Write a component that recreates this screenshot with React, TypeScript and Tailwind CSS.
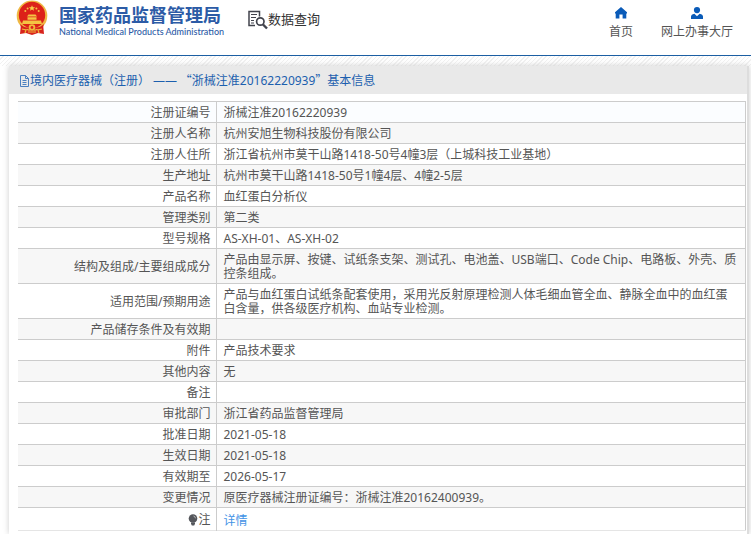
const records = [
  { label: '注册证编号', value: '浙械注准20162220939' },
  { label: '注册人名称', value: '杭州安旭生物科技股份有限公司' },
  { label: '注册人住所', value: '浙江省杭州市莫干山路1418-50号4幢3层（上城科技工业基地）' },
  { label: '生产地址', value: '杭州市莫干山路1418-50号1幢4层、4幢2-5层' },
  { label: '产品名称', value: '血红蛋白分析仪' },
  { label: '管理类别', value: '第二类' },
  { label: '型号规格', value: 'AS-XH-01、AS-XH-02' },
  {
    label: '结构及组成/主要组成成分',
    value: '产品由显示屏、按键、试纸条支架、测试孔、电池盖、USB端口、Code Chip、电路板、外壳、质控条组成。',
  },
  {
    label: '适用范围/预期用途',
    value: '产品与血红蛋白试纸条配套使用，采用光反射原理检测人体毛细血管全血、静脉全血中的血红蛋白含量，供各级医疗机构、血站专业检测。',
  },
  { label: '产品储存条件及有效期', value: '' },
  { label: '附件', value: '产品技术要求' },
  { label: '其他内容', value: '无' },
  { label: '备注', value: '' },
  { label: '审批部门', value: '浙江省药品监督管理局' },
  { label: '批准日期', value: '2021-05-18' },
  { label: '生效日期', value: '2021-05-18' },
  { label: '有效期至', value: '2026-05-17' },
  { label: '变更情况', value: '原医疗器械注册证编号：浙械注准20162400939。' },
];

function Emblem() {
  return (
    <svg viewBox="0 0 32 35" className="w-8 h-[35px] shrink-0" aria-hidden="true">
      <path d="M5 24 L27 24 L28 34 L22 33 L16 35 L10 33 L4 34 Z" fill="#d8231c" />
      <circle cx="16" cy="15.8" r="15.3" fill="#efb843" />
      <circle cx="16" cy="15" r="13.2" fill="#dc2119" />
      <path d="M16 5.2 l.9 2 2.2.1 -1.7 1.4 .6 2.1 -2-1.2 -2 1.2 .6-2.1 -1.7-1.4 2.2-.1z" fill="#f7cf4a" />
      <g fill="#f4c443">
        <circle cx="9.3" cy="11" r="1" />
        <circle cx="22.7" cy="11" r="1" />
        <circle cx="11.6" cy="8.6" r="1" />
        <circle cx="20.4" cy="8.6" r="1" />
        <path d="M12.5 14.5h7l1.5 2H11zM11.5 17.3h9v2.4h-9zM7 20.5h18l1 3.5H6z" />
      </g>
      <path d="M4 24 Q10 29 13 27 L16 25 L19 27 Q22 29 28 24 L26 30 L20 29 L16 32 L12 29 L6 30 Z" fill="#d8231c" />
      <circle cx="16" cy="27.5" r="3.3" fill="#f0b93c" />
      <circle cx="16" cy="27.5" r="1.4" fill="#d8231c" />
      <path d="M6 29l4 1-1 3M26 29l-4 1 1 3M12 32h8" fill="none" stroke="#edb53c" strokeWidth="1.2" />
    </svg>
  );
}

function SearchDocIcon() {
  return (
    <svg viewBox="0 0 20 20" className="w-5 h-5 shrink-0" fill="none" stroke="#41434c" aria-hidden="true">
      <path d="M11.5 6.5V1.5H1v14h6" strokeWidth="1.5" />
      <path d="M3 4.5h6M3 7.5h5M3 10.5h3M3 13h3" strokeWidth="1.2" />
      <circle cx="12.3" cy="11.5" r="3.7" strokeWidth="1.7" />
      <path d="M15 14.5l4 4" strokeWidth="2.4" />
    </svg>
  );
}

function HomeIcon() {
  return (
    <svg viewBox="0 0 12 12" className="w-3 h-3" fill="#0a5bb8" aria-hidden="true">
      <path d="M6 0L12 5.2V6.4H11.3V11.5H7.6V7.5H4.4V11.5H.7V6.4H0V5.2Z" />
    </svg>
  );
}

function UserIcon() {
  return (
    <svg viewBox="0 0 12 12" className="w-3 h-3" fill="#0a5bb8" aria-hidden="true">
      <circle cx="6" cy="3.1" r="3.1" />
      <path d="M0 12V9.6Q0 7.6 3.4 6.8L6 9.3L8.6 6.8Q12 7.6 12 9.6V12Z" />
    </svg>
  );
}

function DocIcon() {
  return (
    <svg viewBox="0 0 11 12" className="w-[11px] h-3 shrink-0" fill="none" stroke="#4b80c0" aria-hidden="true">
      <path d="M1.5.5H6.5L9.5 3.5V11.5H1.5ZM6.5.5V3.5H9.5M3.5 5.5H7.5M3.5 7.5H7.5M3.5 9.5H7.5" />
    </svg>
  );
}

function BulbIcon() {
  return (
    <svg viewBox="0 0 10 12" className="inline-block w-[10px] h-3 align-[-2px]" aria-hidden="true">
      <circle cx="5" cy="4.5" r="4.3" fill="#55575c" />
      <path d="M3 8.5h4v2H6.3v1H3.7v-1H3z" fill="#55575c" />
      <path d="M5.5 2Q7.3 2.5 7.5 4.3" fill="none" stroke="#ddd" strokeWidth=".7" />
    </svg>
  );
}

export default function App() {
  return (
    <div className="flex flex-col min-h-screen overflow-hidden bg-white text-xs text-[#555] font-['Noto_Sans','Noto_Sans_CJK_SC',sans-serif]">
      <header className="flex items-start justify-between h-14 pl-4 pr-[18px] border-b border-[#1c5fa3]">
        <div className="flex items-start">
          <Emblem />
          <a href="#" className="ml-[11px] pt-[5px] text-[#2c5ba6]">
            <span className="block text-lg leading-5 font-bold whitespace-nowrap">国家药品监督管理局</span>
            <span className="block text-[9px] leading-[14px] font-medium whitespace-nowrap font-['Lato',sans-serif]">
              National Medical Products Administration
            </span>
          </a>
          <div className="flex items-start ml-6 pt-[10px]">
            <SearchDocIcon />
            <h1 className="text-[13px] leading-[18px] text-[#333]">数据查询</h1>
          </div>
        </div>
        <nav className="flex gap-7 pt-[7px]">
          <a href="#" className="flex flex-col items-center gap-[5px]">
            <HomeIcon />
            <span className="leading-4">首页</span>
          </a>
          <a href="#" className="flex flex-col items-center gap-[5px]">
            <UserIcon />
            <span className="leading-4">网上办事大厅</span>
          </a>
        </nav>
      </header>
      <div className="h-[10px] bg-[repeating-linear-gradient(135deg,#fff_0_2px,#f1f1f1_2px_3px)]" />

      <main className="flex-1 ml-[9px] mr-[2px] border-r-2 border-[#ddd] shadow-[0_0_6px_#ccc] bg-white">
        <h2 className="flex items-center h-7 pt-px pl-[10px] bg-[#e9e9e9] text-[#1c5fae]">
          <DocIcon />
          <span>
            境内医疗器械（注册） ——
            <span className="font-['Noto_Sans_CJK_SC',sans-serif]"> “</span>
            浙械注准20162220939
            <span className="font-['Noto_Sans_CJK_SC',sans-serif]">”</span>
            基本信息
          </span>
        </h2>
        <div className="pt-[7px] pl-[9px] pr-px">
          <table className="w-full border-collapse leading-[14px] border-r border-[#ccc]">
            <tbody>
              {records.map((record) => (
                <tr key={record.label} className="border-t border-[#ccc] first:bg-[#fbfdff] even:bg-[#f7f7f7]">
                  <th
                    scope="row"
                    className="w-[198px] h-[21px] px-[5px] pt-1 pb-[2px] text-right font-normal border-r border-[#ccc]"
                  >
                    {record.label}
                  </th>
                  <td className="px-[7px] pt-1 pb-[2px]">{record.value}</td>
                </tr>
              ))}
              <tr className="border-t border-b border-t-[#ccc] border-b-[#e5e5e5]">
                <th scope="row" className="h-[23px] px-[5px] pt-[5px] pb-[3px] text-right font-normal border-r border-[#ccc]">
                  <BulbIcon />注
                </th>
                <td className="px-[7px] pt-[6px] pb-[2px]">
                  <a href="#" className="text-[#4393e6]">详情</a>
                </td>
              </tr>
            </tbody>
          </table>
        </div>
      </main>
    </div>
  );
}
